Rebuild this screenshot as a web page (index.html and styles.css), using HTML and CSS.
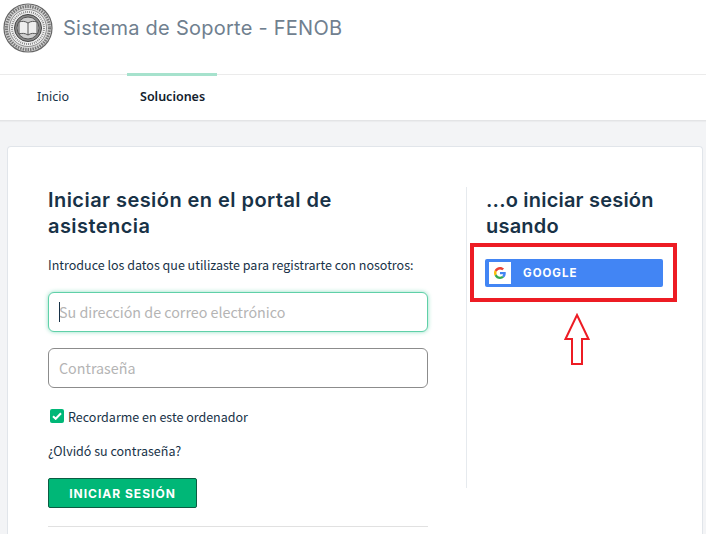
FILE: index.html
```html
<!DOCTYPE html>
<html lang="es">
<head>
<meta charset="utf-8">
<title>Sistema de Soporte - FENOB</title>
<link rel="stylesheet" href="styles.css">
</head>
<body>
<header class="top">
  <svg class="logo" width="50" height="50" viewBox="0 0 50 50" aria-hidden="true">
    <circle cx="25" cy="25" r="24" fill="#d8d8d8" stroke="#666" stroke-width="1.2"/>
    <circle cx="25" cy="25" r="21.5" fill="none" stroke="#777" stroke-width="3" stroke-dasharray="1.5 1"/>
    <circle cx="25" cy="25" r="18.5" fill="#f2f2f2" stroke="#777" stroke-width=".8"/>
    <circle cx="25" cy="25" r="16" fill="none" stroke="#8a8a8a" stroke-width="2" stroke-dasharray="1 1"/>
    <circle cx="25" cy="25" r="13.5" fill="#888" stroke="#444" stroke-width="1"/>
    <circle cx="25" cy="25" r="11" fill="#cfcfcf" stroke="#555" stroke-width="1"/>
    <path d="M16 19c3-1 6-1 9 1 3-2 6-2 9-1v12c-3-1-6-1-9 1-3-2-6-2-9-1z" fill="#eee" stroke="#555" stroke-width="1"/>
    <path d="M25 20v12" stroke="#555" stroke-width="1"/>
  </svg>
  <div class="brand">Sistema de Soporte - FENOB</div>
</header>
<nav class="nav">
  <a class="tab tab-home" href="#">Inicio</a>
  <a class="tab tab-active" href="#">Soluciones</a>
</nav>
<main class="page">
  <section class="card">
    <div class="login">
      <h2 class="title title-login">Iniciar sesión en el portal de asistencia</h2>
      <p class="intro">Introduce los datos que utilizaste para registrarte con nosotros:</p>
      <div class="field field-focus"><span class="caret"></span><span class="ph">Su dirección de correo electrónico</span></div>
      <div class="field"><span class="ph">Contraseña</span></div>
      <label class="remember">
        <span class="check"><svg width="10" height="8" viewBox="0 0 10 8" aria-hidden="true"><path d="M1 4.2 3.7 6.8 9 1.2" fill="none" stroke="#fff" stroke-width="2"/></svg></span>
        Recordarme en este ordenador
      </label>
      <a class="forgot" href="#">¿Olvidó su contraseña?</a>
      <button class="submit" type="button">INICIAR SESIÓN</button>
      <hr class="rule">
    </div>
    <aside class="social">
      <h2 class="title">...o iniciar sesión usando</h2>
      <div class="callout">
        <button class="google" type="button">
          <span class="g-box">
            <svg width="12" height="12" viewBox="0 0 48 48" aria-hidden="true">
              <path fill="#EA4335" d="M24 9.5c3.5 0 6.700 1.200 9.200 3.600l6.900-6.900C35.900 2.400 30.500 0 24 0 14.600 0 6.500 5.400 2.600 13.200l8 6.200C12.500 13.700 17.800 9.500 24 9.500z"/>
              <path fill="#4285F4" d="M47 24.500c0-1.600-.1-3.100-.4-4.500H24v9h13c-.6 3-2.200 5.500-4.800 7.200l7.700 6C44.400 38 47 31.800 47 24.500z"/>
              <path fill="#FBBC05" d="M10.600 28.600c-.5-1.400-.8-3-.8-4.600s.3-3.200.8-4.600l-8-6.200C.9 16.500 0 20.100 0 24s.9 7.500 2.600 10.800z"/>
              <path fill="#34A853" d="M24 48c6.500 0 11.900-2.100 15.900-5.800l-7.700-6c-2.200 1.400-4.900 2.300-8.200 2.300-6.200 0-11.500-4.200-13.400-9.900l-8 6.200C6.500 42.600 14.600 48 24 48z"/>
            </svg>
          </span>
          <span class="g-label">GOOGLE</span>
        </button>
      </div>
      <svg class="arrow" width="26" height="54" viewBox="0 0 26 54" aria-hidden="true">
        <path d="M13 2 24.500 26H18V51H8V26H1.500z" fill="#fff" stroke="#ed1c24" stroke-width="2"/>
      </svg>
    </aside>
  </section>
</main>
</body>
</html>
```

FILE: styles.css
```css
* { box-sizing: border-box; }
html, body { margin: 0; height: 100%; overflow: hidden; }
body {
  background: #f3f4f6;
  font-family: "Noto Sans CJK SC", "Lato", "Noto Sans", sans-serif;
  color: #183247;
}
.top {
  height: 75px;
  background: #fff;
  border-bottom: 1px solid #ebebeb;
  display: flex;
  align-items: flex-start;
  padding: 3px 0 0 3px;
  gap: 10px;
}
.logo { display: block; }
.brand {
  font-family: "Inter", "Noto Sans", sans-serif;
  font-size: 20px;
  line-height: 50px;
  color: #70808f;
  letter-spacing: .25px;
}
.nav {
  height: 46px;
  background: #fff;
  border-bottom: 1px solid #e3e4e6;
  box-shadow: 0 1px 1px rgba(0,0,0,.03);
  display: flex;
  position: relative;
  padding-left: 37px;
}
.tab {
  font-family: "Noto Sans", sans-serif;
  font-size: 12.5px;
  line-height: 44px;
  color: #183247;
  text-decoration: none;
}
.tab-home { width: 103px; }
.tab-active {
  color: #12202c;
  font-weight: 600;
  position: relative;
}
.tab-active::before {
  content: "";
  position: absolute;
  left: -13px;
  right: -12px;
  top: -2px;
  height: 3px;
  background: #a6e2cd;
}
.page { padding: 25px 3px 0 7px; }
.card {
  background: #fff;
  border: 1px solid #e1e5ea;
  border-bottom: 0;
  border-radius: 4px 4px 0 0;
  display: flex;
  height: 388px;
  padding: 40px 0 0 40px;
}
.login { width: 380px; }
.title {
  margin: 0;
  font-family: "Inter", "Noto Sans", sans-serif;
  font-size: 20px;
  line-height: 26px;
  font-weight: 600;
  color: #183247;
  letter-spacing: .2px;
}
.title-login { max-width: 300px; letter-spacing: .45px; }
.intro {
  margin: 16px 0 0;
  font-size: 12.5px;
  line-height: 20px;
  color: #183247;
}
.field {
  height: 40px;
  margin-top: 16px;
  border: 1px solid #8c8c8c;
  border-radius: 6px;
  display: flex;
  align-items: center;
  padding: 0 0 2px 10px;
  font-size: 14.3px;
  color: #b4b4b4;
  background: #fff;
}
.field-focus {
  margin-top: 17px;
  border-color: #5fd0a8;
  box-shadow: 0 0 4px rgba(82,205,162,.65);
  position: relative;
}
.caret {
  position: absolute;
  left: 10px;
  top: 9px;
  width: 1px;
  height: 20px;
  background: #183247;
}
.remember {
  display: flex;
  align-items: center;
  gap: 4px;
  margin: 18px 0 0 2px;
  height: 20px;
  font-size: 12.5px;
  color: #183247;
}
.check {
  width: 14px;
  height: 14px;
  border-radius: 2px;
  background: #00b777;
  display: flex;
  align-items: center;
  justify-content: center;
}
.forgot {
  display: block;
  margin-top: 15px;
  font-size: 12.5px;
  line-height: 20px;
  color: #183247;
  text-decoration: none;
}
.submit {
  display: block;
  width: 149px;
  height: 30px;
  margin-top: 17px;
  padding: 0;
  background: #00b777;
  border: 1px solid #0b5c42;
  border-radius: 2px;
  color: #fff;
  font-family: "Inter", "Noto Sans", sans-serif;
  font-size: 12px;
  font-weight: 700;
  letter-spacing: 1px;
}
.rule {
  margin: 18px 0 0;
  border: 0;
  border-top: 1px solid #e1e1e1;
}
.social {
  margin-left: 38px;
  width: 200px;
  height: 301px;
  border-left: 1px solid #e6eaee;
  padding-left: 19px;
  position: relative;
  align-self: flex-start;
}
.callout {
  margin: 4px 0 0 -16px;
  width: 207px;
  height: 59px;
  border: 4px solid #ed1c24;
  padding: 12px 10px 0 11px;
}
.google {
  display: flex;
  align-items: center;
  width: 178px;
  height: 28px;
  padding: 2px;
  border: 0;
  border-radius: 2px;
  background: #4285f4;
  color: #fff;
}
.g-box {
  width: 22px;
  height: 22px;
  background: #fff;
  display: flex;
  align-items: center;
  justify-content: center;
  margin-left: 2px;
}
.g-label {
  margin-left: 12px;
  font-family: "Inter", "Noto Sans", sans-serif;
  font-size: 11.5px;
  font-weight: 700;
  letter-spacing: 1px;
}
.arrow {
  display: block;
  margin: 11px 0 0 78px;
}
```
